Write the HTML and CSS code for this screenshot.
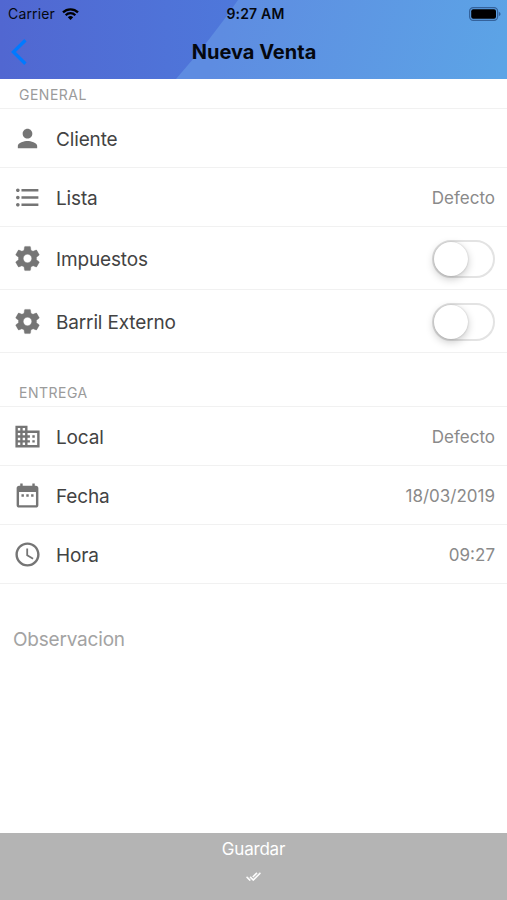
FILE: index.html
```
<!DOCTYPE html>
<html lang="es">
<head>
    <meta charset="UTF-8">
    <meta name="viewport" content="width=device-width, initial-scale=1.0">
    <title>Nueva Venta</title>
    <link rel="stylesheet" href="styles.css">
</head>
<body>
<header class="header">
    <svg class="header-bg" viewBox="0 0 507 79" preserveAspectRatio="none">
        <defs>
            <linearGradient id="dark" x1="0" x2="1">
                <stop offset="0" stop-color="#5167d1"/>
                <stop offset="1" stop-color="#4e78db"/>
            </linearGradient>
            <linearGradient id="light" gradientUnits="userSpaceOnUse" x1="230" y1="0" x2="500" y2="79">
                <stop offset="0" stop-color="#5e8ce1"/>
                <stop offset="1" stop-color="#5ca4e6"/>
            </linearGradient>
        </defs>
        <rect width="507" height="79" fill="url(#light)"/>
        <path d="M0 0H238Q212 38 176 79H0z" fill="url(#dark)"/>
    </svg>
    <div class="status">
        <div class="carrier">
            <span>Carrier</span>
            <svg class="wifi" viewBox="0 0 17 12" fill="none" stroke="#000" stroke-width="2.3">
                <path d="M1 4.4a10.7 10.7 0 0 1 15 0M3.7 7.2a6.8 6.8 0 0 1 9.6 0"/>
                <path d="M8.5 12 5.8 9.3a3.9 3.9 0 0 1 5.4 0z" fill="#000" stroke="none"/>
            </svg>
        </div>
        <span class="time">9:27 AM</span>
        <svg class="battery" viewBox="0 0 32 14">
            <rect x=".6" y=".6" width="28" height="12.8" rx="3.6" fill="none" stroke="#34629b" stroke-width="1.2"/>
            <rect x="2.2" y="2.3" width="24.8" height="9.4" rx="2" fill="#000"/>
            <path d="M29.8 4.7q1.8.7 1.8 2.3t-1.8 2.3z" fill="#34629b"/>
        </svg>
    </div>
    <div class="navbar">
        <svg class="back" viewBox="0 0 16 26" fill="none" stroke="#007aff" stroke-width="3.3">
            <path d="M14.4 1.2 2.4 13l12 11.8"/>
        </svg>
        <h1 class="title">Nueva Venta</h1>
    </div>
</header>

<main class="content">
    <h2 class="section">GENERAL</h2>
    <div class="row">
        <svg class="icon" viewBox="0 0 24 24"><path d="M12 12c2.210 0 4-1.790 4-4s-1.790-4-4-4-4 1.790-4 4 1.790 4 4 4zm0 2c-2.670 0-8 1.340-8 4v2h16v-2c0-2.660-5.330-4-8-4z"/></svg>
        <span class="label">Cliente</span>
    </div>
    <div class="row">
        <svg class="icon" viewBox="0 0 24 24"><path d="M4 10.500c-.83 0-1.500.67-1.500 1.500s.67 1.500 1.500 1.500 1.500-.67 1.500-1.500-.67-1.500-1.500-1.500zm0-6c-.83 0-1.500.67-1.500 1.500S3.170 7.500 4 7.500 5.500 6.830 5.500 6 4.830 4.500 4 4.500zm0 12c-.83 0-1.500.68-1.500 1.500s.68 1.500 1.500 1.500 1.500-.68 1.500-1.500-.67-1.500-1.500-1.500zM7 19h14v-2H7v2zm0-6h14v-2H7v2zm0-8v2h14V5H7z"/></svg>
        <span class="label">Lista</span>
        <span class="value">Defecto</span>
    </div>
    <div class="row tall">
        <svg class="icon gear" viewBox="0 0 24 24"><path d="M12 15.500A3.500 3.500 0 0 1 8.500 12 3.500 3.500 0 0 1 12 8.500a3.500 3.500 0 0 1 3.500 3.500 3.500 3.500 0 0 1-3.500 3.500m7.430-2.530c.04-.32.07-.64.07-.97s-.03-.66-.07-1l2.110-1.630c.19-.15.24-.42.12-.64l-2-3.460c-.12-.22-.39-.31-.61-.22l-2.490 1c-.52-.39-1.060-.73-1.690-.98l-.37-2.650A.506.506 0 0 0 14 2h-4c-.25 0-.46.18-.5.42l-.37 2.650c-.63.25-1.170.59-1.690.98l-2.490-1c-.22-.09-.49 0-.61.22l-2 3.460c-.13.22-.07.49.12.64L4.570 11c-.04.34-.07.67-.07 1s.03.65.07.97l-2.110 1.660c-.19.15-.25.42-.12.64l2 3.460c.12.22.39.3.61.22l2.490-1.010c.52.4 1.060.74 1.690.99l.37 2.650c.04.24.25.42.5.42h4c.25 0 .46-.18.5-.42l.37-2.650c.63-.26 1.170-.59 1.690-.99l2.490 1.010c.22.08.49 0 .61-.22l2-3.460c.12-.22.07-.49-.12-.64z"/></svg>
        <span class="label">Impuestos</span>
        <span class="switch"></span>
    </div>
    <div class="row tall">
        <svg class="icon gear" viewBox="0 0 24 24"><path d="M12 15.500A3.500 3.500 0 0 1 8.500 12 3.500 3.500 0 0 1 12 8.500a3.500 3.500 0 0 1 3.500 3.500 3.500 3.500 0 0 1-3.500 3.500m7.430-2.530c.04-.32.07-.64.07-.97s-.03-.66-.07-1l2.110-1.630c.19-.15.24-.42.12-.64l-2-3.460c-.12-.22-.39-.31-.61-.22l-2.490 1c-.52-.39-1.060-.73-1.690-.98l-.37-2.650A.506.506 0 0 0 14 2h-4c-.25 0-.46.18-.5.42l-.37 2.650c-.63.25-1.170.59-1.690.98l-2.490-1c-.22-.09-.49 0-.61.22l-2 3.460c-.13.22-.07.49.12.64L4.570 11c-.04.34-.07.67-.07 1s.03.65.07.97l-2.110 1.660c-.19.15-.25.42-.12.64l2 3.460c.12.22.39.3.61.22l2.490-1.010c.52.4 1.060.74 1.690.99l.37 2.650c.04.24.25.42.5.42h4c.25 0 .46-.18.5-.42l.37-2.650c.63-.26 1.170-.59 1.690-.99l2.490 1.010c.22.08.49 0 .61-.22l2-3.460c.12-.22.07-.49-.12-.64z"/></svg>
        <span class="label">Barril Externo</span>
        <span class="switch"></span>
    </div>

    <h2 class="section spaced">ENTREGA</h2>
    <div class="row">
        <svg class="icon" viewBox="0 0 24 24"><path d="M12 7V3H2v18h20V7H12zM6 19H4v-2h2v2zm0-4H4v-2h2v2zm0-4H4V9h2v2zm0-4H4V5h2v2zm4 12H8v-2h2v2zm0-4H8v-2h2v2zm0-4H8V9h2v2zm0-4H8V5h2v2zm10 12h-8v-2h2v-2h-2v-2h2v-2h-2V9h8v10zm-2-8h-2v2h2v-2zm0 4h-2v2h2v-2z"/></svg>
        <span class="label">Local</span>
        <span class="value">Defecto</span>
    </div>
    <div class="row">
        <svg class="icon" viewBox="0 0 24 24"><path d="M9 11H7v2h2v-2zm4 0h-2v2h2v-2zm4 0h-2v2h2v-2zm2-7h-1V2h-2v2H8V2H6v2H5c-1.110 0-2 .9-2 2v14c0 1.100.89 2 2 2h14c1.100 0 2-.9 2-2V6c0-1.100-.9-2-2-2zm0 16H5V9h14v11z"/></svg>
        <span class="label">Fecha</span>
        <span class="value">18/03/2019</span>
    </div>
    <div class="row">
        <svg class="icon" viewBox="0 0 24 24"><path d="M11.990 2C6.470 2 2 6.480 2 12s4.470 10 9.990 10C17.520 22 22 17.520 22 12S17.520 2 11.990 2zM12 20c-4.420 0-8-3.580-8-8s3.580-8 8-8 8 3.580 8 8-3.580 8-8 8zM12.500 7H11v6l5.250 3.150.75-1.230-4.500-2.670z"/></svg>
        <span class="label">Hora</span>
        <span class="value">09:27</span>
    </div>

    <textarea class="notes" placeholder="Observacion"></textarea>
</main>

<button class="save">
    <span>Guardar</span>
    <svg class="check" viewBox="0 0 24 24"><path d="M18 7l-1.410-1.410-6.340 6.340 1.410 1.410L18 7zm4.240-1.410L11.660 16.170 7.480 12l-1.410 1.410L11.660 19l12-12-1.420-1.410zM.41 13.410L6 19l1.410-1.410L1.830 12 .41 13.410z"/></svg>
</button>
</body>
</html>
```
FILE: styles.css
```
* {
    box-sizing: border-box;
}

body {
    margin: 0;
    height: 900px;
    display: flex;
    flex-direction: column;
    background: #fff;
    color: #434343;
    font-family: Inter, "Liberation Sans", sans-serif;
}

.header {
    position: relative;
    height: 79px;
    color: #05080f;
}

.header-bg {
    position: absolute;
    z-index: -1;
    width: 100%;
    height: 100%;
}

.status {
    display: grid;
    grid-template-columns: 1fr auto 1fr;
    align-items: center;
    height: 27px;
    padding: 0 6px 0 8px;
    font-size: 14px;
}

.carrier {
    display: flex;
    align-items: center;
    gap: 7px;
    letter-spacing: 0.15px;
}

.wifi {
    width: 17px;
    height: 12px;
}

.time {
    padding-left: 2px;
    font-weight: 600;
    font-size: 14px;
    letter-spacing: 0.2px;
}

.battery {
    width: 32px;
    height: 14px;
    justify-self: end;
}

.navbar {
    display: grid;
    grid-template-columns: 60px 1fr 60px;
    align-items: center;
    height: 50px;
}

.back {
    width: 16px;
    height: 26px;
    margin-left: 11px;
}

.title {
    margin: 0;
    padding-left: 1px;
    text-align: center;
    font-size: 20px;
    font-weight: 700;
}

.content {
    flex: 1;
    display: flex;
    flex-direction: column;
}

.section {
    display: flex;
    align-items: flex-end;
    height: 30px;
    margin: 0;
    padding: 0 19px 5px;
    border-bottom: 1px solid #f1f1f1;
    color: #9b9b9b;
    font-size: 14px;
    font-weight: 400;
    letter-spacing: 0.5px;
}

.section.spaced {
    height: 54px;
}

.row {
    display: flex;
    align-items: center;
    height: 59px;
    padding: 1px 12px 0 13px;
    border-bottom: 1px solid #f1f1f1;
}

.row.tall {
    height: 63px;
}

.icon {
    width: 29px;
    height: 29px;
    margin-right: 14px;
    fill: #757575;
}

.gear {
    stroke: #757575;
    stroke-width: 0.3;
}

.label {
    flex: 1;
    padding-top: 1px;
    font-size: 19px;
    letter-spacing: -0.15px;
}

.value {
    padding-top: 1px;
    color: #8a8a8a;
    font-size: 17px;
}

.switch {
    width: 63px;
    height: 38px;
    border: 2px solid #e3e3e3;
    border-radius: 19px;
}

.switch::before {
    content: "";
    display: block;
    width: 34px;
    height: 34px;
    border-radius: 50%;
    background: #fff;
    box-shadow: 0 3px 8px rgba(0, 0, 0, 0.22), 0 0 2px rgba(0, 0, 0, 0.2);
}

.notes {
    margin: 44px 13px 0;
    padding: 0;
    height: 120px;
    border: none;
    outline: none;
    resize: none;
    font-family: inherit;
    font-size: 19px;
    letter-spacing: -0.2px;
    color: #434343;
}

.notes::placeholder {
    color: #a3a3a3;
}

.save {
    display: flex;
    flex-direction: column;
    align-items: center;
    height: 67px;
    padding: 6px 0 0;
    border: none;
    background: #b4b4b4;
    color: #fff;
    font-family: inherit;
    font-size: 17px;
    letter-spacing: -0.2px;
}

.check {
    width: 15px;
    height: 15px;
    margin-top: 10px;
    fill: #fff;
    stroke: #fff;
    stroke-width: 0.6;
}
```
